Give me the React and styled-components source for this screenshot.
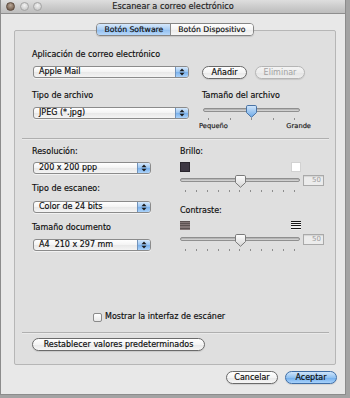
import React from 'react'
import styled, { createGlobalStyle } from 'styled-components'

const GlobalStyle = createGlobalStyle`
  html, body {
    margin: 0;
    padding: 0;
    background: #a3a3a3;
  }
  body {
    font-family: "DejaVu Sans", "Lucida Grande", sans-serif;
    color: #0c0c0c;
    -webkit-text-stroke: 0.15px currentColor;
  }
`

const Window = styled.div`
  width: 346px;
  height: 395px;
  box-sizing: border-box;
  background: #e8e8e8;
  border: 1px solid #8c8c8c;
  border-top: none;
  display: flex;
  flex-direction: column;
`

const TitleBar = styled.div`
  height: 13px;
  border-bottom: 1px solid #8e8e8e;
  background: linear-gradient(#dedede, #c9c9c9 60%, #bdbdbd);
  display: grid;
  grid-template-columns: 1fr auto 1fr;
  align-items: center;
`

const Lights = styled.div`
  display: flex;
  gap: 4.5px;
  padding-left: 5px;
`

const Light = styled.span`
  width: 9px;
  height: 9px;
  border-radius: 50%;
  box-sizing: border-box;
  border: 1px solid ${p => (p.$close ? '#5c4a3e' : '#a4a4a4')};
  background: ${p =>
    p.$close
      ? 'radial-gradient(circle at 50% 35%, #b9a797, #7c6757 70%)'
      : 'radial-gradient(circle at 50% 35%, #f2f2f2, #cbcbcb 75%)'};
`

const Title = styled.div`
  font-size: 8.2px;
  line-height: 13px;
  color: #1e1e1e;
`

const Content = styled.div`
  padding: 16px 0 0 13px;
`

const TabBox = styled.div`
  width: 322px;
  height: 335px;
  box-sizing: border-box;
  border: 1px solid #b6b6b6;
  border-radius: 2px;
  background: #dfdfdf;
  display: flex;
  flex-direction: column;
`

const Tabs = styled.div`
  align-self: center;
  margin-top: -8px;
  display: flex;
  height: 13px;
  box-sizing: border-box;
  border: 1px solid #858585;
  border-radius: 4px;
  overflow: hidden;
  box-shadow: 0 1px 1px rgba(0, 0, 0, 0.12);
`

const Tab = styled.div`
  padding: 0 7px;
  font-size: 7.7px;
  line-height: 11px;
  color: #0a0a0a;
  background: ${p =>
    p.$active
      ? 'linear-gradient(#d6e8fb, #a9cdf4 50%, #8fbdef 51%, #b7d8fa)'
      : 'linear-gradient(#ffffff, #f4f4f4 50%, #e9e9e9 51%, #f7f7f7)'};
  & + & {
    border-left: 1px solid #8a8a8a;
  }
`

const Section = styled.div`
  display: flex;
  flex-direction: column;
  padding-left: 17px;
  margin-top: ${p => p.$mt || 0}px;
`

const Row = styled.div`
  display: flex;
  align-items: flex-start;
  gap: ${p => p.$gap ?? 13}px;
  margin-top: ${p => p.$mt || 0}px;
`

const Col = styled.div`
  display: flex;
  flex-direction: column;
  width: ${p => (p.$w ? `${p.$w}px` : 'auto')};
`

const Label = styled.div`
  font-size: 8px;
  line-height: 12px;
  height: 12px;
  white-space: nowrap;
  margin-top: ${p => p.$mt || 0}px;
`

const PopupBox = styled.div`
  width: ${p => p.$w}px;
  height: 12px;
  box-sizing: border-box;
  margin-top: ${p => p.$mt || 0}px;
  margin-left: 1px;
  border: 1px solid #8b8b8b;
  border-radius: 3px;
  background: linear-gradient(#ffffff, #f3f3f3 50%, #e8e8e8 51%, #f4f4f4);
  display: flex;
  align-items: stretch;
  overflow: hidden;
  box-shadow: 0 1px 0 rgba(255, 255, 255, 0.6);
`

const PopupText = styled.span`
  flex: 1;
  padding-left: 5px;
  font-size: 8px;
  line-height: 10px;
  color: #0a0a0a;
  white-space: pre;
`

const PopupArrows = styled.span`
  width: 12px;
  border-left: 1px solid #7193bb;
  background: linear-gradient(#d6e9fc, #98c4f2 50%, #78b0ec 51%, #acd3fa);
  display: flex;
  align-items: center;
  justify-content: center;
`

function Popup({ w, mt, children }) {
  return (
    <PopupBox $w={w} $mt={mt}>
      <PopupText>{children}</PopupText>
      <PopupArrows>
        <svg width="6" height="8" viewBox="0 0 6 8">
          <path d="M3 0.5 L5.5 3.2 H0.5 Z" fill="#1b1b1b" />
          <path d="M3 7.5 L5.5 4.8 H0.5 Z" fill="#1b1b1b" />
        </svg>
      </PopupArrows>
    </PopupBox>
  )
}

const Button = styled.button`
  width: ${p => p.$w}px;
  height: 13px;
  padding: 0;
  box-sizing: border-box;
  border: 1px solid ${p => (p.disabled ? '#b5b5b5' : p.$primary ? '#3f6ea6' : '#6a6a6a')};
  border-radius: 7px;
  background: ${p =>
    p.$primary
      ? 'linear-gradient(#cfe5fb, #92c2f1 50%, #6eacec 51%, #a8d2fb)'
      : p.disabled
      ? 'linear-gradient(#f4f4f4, #ececec 50%, #e4e4e4 51%, #eeeeee)'
      : 'linear-gradient(#ffffff, #f4f4f4 50%, #e8e8e8 51%, #f6f6f6)'};
  font-family: "DejaVu Sans", "Lucida Grande", sans-serif;
  font-size: 8px;
  line-height: 11px;
  color: ${p => (p.disabled ? '#a2a2a2' : '#0a0a0a')};
  -webkit-text-stroke: ${p => (p.disabled ? '0' : '0.15px')} currentColor;
  box-shadow: 0 1px 1px rgba(0, 0, 0, 0.1);
`

const SliderWrap = styled.div`
  position: relative;
  width: ${p => p.$w}px;
  height: 13px;
  margin-left: ${p => p.$ml || 0}px;
  margin-top: ${p => p.$mt || 0}px;
`

const Track = styled.div`
  margin-top: 3px;
  height: 4px;
  box-sizing: border-box;
  border: 1px solid #8f8f8f;
  border-radius: 2px;
  background: linear-gradient(#a9a9a9, #dcdcdc);
`

const Thumb = styled.svg`
  position: absolute;
  top: 0;
  left: calc(${p => p.$pos}% - 5.5px);
`

function Slider({ w, pos, blue, ml, mt }) {
  const id = blue ? 'thumbBlue' : 'thumbGray'
  return (
    <SliderWrap $w={w} $ml={ml} $mt={mt}>
      <Track />
      <Thumb $pos={pos} width="11" height="13" viewBox="0 0 11 13">
        <defs>
          <linearGradient id={id} x1="0" y1="0" x2="0" y2="1">
            <stop offset="0" stopColor={blue ? '#d3e7fb' : '#ffffff'} />
            <stop offset="1" stopColor={blue ? '#6aa7e6' : '#d4d4d4'} />
          </linearGradient>
        </defs>
        <path
          d="M1.8 0.5 H9.2 A1.3 1.3 0 0 1 10.5 1.8 V7.6 L5.5 12.3 L0.5 7.6 V1.8 A1.3 1.3 0 0 1 1.8 0.5 Z"
          fill={`url(#${id})`}
          stroke={blue ? '#4a73a4' : '#7a7a7a'}
        />
      </Thumb>
    </SliderWrap>
  )
}

const Ticks = styled.div`
  display: flex;
  justify-content: space-between;
  width: ${p => p.$w}px;
  box-sizing: border-box;
  padding: 0 5px;
  margin-left: ${p => p.$ml || 0}px;
  margin-top: ${p => p.$mt || 0}px;
  height: 2px;
`

const Tick = styled.span`
  width: 1px;
  height: 2px;
  background: #8d8d8d;
`

function TickRow({ w, n, ml, mt }) {
  return (
    <Ticks $w={w} $ml={ml} $mt={mt}>
      {Array.from({ length: n }, (_, i) => (
        <Tick key={i} />
      ))}
    </Ticks>
  )
}

const ScaleLabels = styled.div`
  display: flex;
  justify-content: space-between;
  width: 112px;
  margin-left: -3px;
  margin-top: 2px;
  font-size: 6.7px;
  line-height: 9px;
  color: #161616;
`

const Divider = styled.div`
  height: 1px;
  margin: ${p => p.$mt || 0}px 6px 0 7px;
  background: #afafaf;
  box-shadow: 0 1px 0 rgba(255, 255, 255, 0.35);
`

const IconRow = styled.div`
  display: flex;
  justify-content: space-between;
  align-items: flex-start;
  width: 121px;
  margin-top: ${p => p.$mt || 0}px;
`

const Swatch = styled.span`
  width: 10px;
  height: 10px;
  box-sizing: border-box;
  border: 1px solid ${p => (p.$dark ? '#29252c' : '#d2d2d2')};
  background: ${p => (p.$dark ? '#3d3742' : '#ffffff')};
`

const Stripes = styled.span`
  width: 10px;
  height: 9px;
  background: ${p =>
    p.$high
      ? 'repeating-linear-gradient(#1a1a1a 0 1px, #f2f2f2 1px 2.2px)'
      : 'repeating-linear-gradient(#5b5151 0 1px, #837676 1px 2.2px)'};
`

const Field = styled.div`
  width: 21px;
  height: 11px;
  box-sizing: border-box;
  margin-left: 3px;
  border: 1px solid #a9a9a9;
  background: #ececec;
  box-shadow: inset 0 1px 1px rgba(0, 0, 0, 0.1);
  font-size: 7px;
  line-height: 9px;
  text-align: right;
  padding-right: 2px;
  color: #9c9c9c;
  -webkit-text-stroke: 0;
`

const SliderRow = styled.div`
  display: flex;
  align-items: flex-start;
  margin-top: ${p => p.$mt || 0}px;
`

const CheckRow = styled.label`
  display: flex;
  align-items: center;
  gap: 3px;
  height: 12px;
  margin-top: ${p => p.$mt || 0}px;
  padding-left: 78px;
  font-size: 8px;
  line-height: 12px;
`

const CheckBox = styled.span`
  width: 9px;
  height: 9px;
  box-sizing: border-box;
  border: 1px solid #8a8a8a;
  border-radius: 2px;
  background: linear-gradient(#ffffff, #e8e8e8);
`

const Footer = styled.div`
  width: 323px;
  display: flex;
  justify-content: flex-end;
  gap: 7px;
  margin-top: 6px;
`

function SliderBlock({ mt }) {
  return (
    <>
      <SliderRow $mt={mt}>
        <Slider w={120} pos={50} />
        <Field>50</Field>
      </SliderRow>
      <TickRow w={120} n={11} mt={2} />
    </>
  )
}

export default function App() {
  return (
    <>
      <GlobalStyle />
      <Window>
        <TitleBar>
          <Lights>
            <Light $close />
            <Light />
            <Light />
          </Lights>
          <Title>Escanear a correo electrónico</Title>
          <span />
        </TitleBar>
        <Content>
          <TabBox>
            <Tabs>
              <Tab $active>Botón Software</Tab>
              <Tab>Botón Dispositivo</Tab>
            </Tabs>

            <Section $mt={13}>
              <Label>Aplicación de correo electrónico</Label>
              <Row $mt={5}>
                <Popup w={156}>Apple Mail</Popup>
                <Row $gap={8}>
                  <Button $w={45}>Añadir</Button>
                  <Button $w={50} disabled>Eliminar</Button>
                </Row>
              </Row>
              <Row $mt={11}>
                <Col $w={157}>
                  <Label>Tipo de archivo</Label>
                  <Popup w={156} mt={5}>JPEG (*.jpg)</Popup>
                </Col>
                <Col>
                  <Label>Tamaño del archivo</Label>
                  <Slider w={97} pos={50} blue ml={1} mt={3} />
                  <TickRow w={97} n={5} ml={1} />
                  <ScaleLabels>
                    <span>Pequeño</span>
                    <span>Grande</span>
                  </ScaleLabels>
                </Col>
              </Row>
            </Section>

            <Divider $mt={7} />

            <Section $mt={7}>
              <Row $gap={0}>
                <Col $w={148}>
                  <Label>Resolución:</Label>
                  <Popup w={118} mt={4}>200 x 200 ppp</Popup>
                  <Label $mt={9}>Tipo de escaneo:</Label>
                  <Popup w={118} mt={6}>Color de 24 bits</Popup>
                  <Label $mt={9}>Tamaño documento</Label>
                  <Popup w={118} mt={5}>{'A4  210 x 297 mm'}</Popup>
                </Col>
                <Col>
                  <Label>Brillo:</Label>
                  <IconRow $mt={4}>
                    <Swatch $dark />
                    <Swatch />
                  </IconRow>
                  <SliderBlock mt={3} />
                  <Label $mt={13}>Contraste:</Label>
                  <IconRow $mt={4}>
                    <Stripes />
                    <Stripes $high />
                  </IconRow>
                  <SliderBlock mt={4} />
                </Col>
              </Row>
            </Section>

            <CheckRow $mt={60}>
              <CheckBox />
              Mostrar la interfaz de escáner
            </CheckRow>

            <Divider $mt={9} />

            <Section $mt={5}>
              <Row>
                <Button $w={173}>Restablecer valores predeterminados</Button>
              </Row>
            </Section>
          </TabBox>

          <Footer>
            <Button $w={52}>Cancelar</Button>
            <Button $w={52} $primary>Aceptar</Button>
          </Footer>
        </Content>
      </Window>
    </>
  )
}
